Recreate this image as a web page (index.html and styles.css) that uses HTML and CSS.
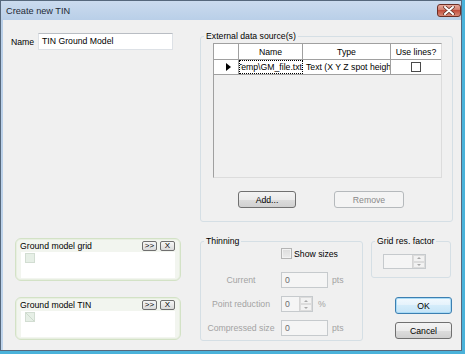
FILE: index.html
```html
<!DOCTYPE html>
<html lang="en">
<head>
  <meta charset="UTF-8">
  <meta name="viewport" content="width=device-width, initial-scale=1.0">
  <title>Create new TIN</title>
  <link rel="stylesheet" href="styles.css">
</head>
<body>
  <div class="window">
    <div class="titlebar">
      <span class="title">Create new TIN</span>
      <span class="close">
        <svg width="12" height="9" viewBox="0 0 12 9">
          <path d="M2 1 L10 8 M10 1 L2 8" stroke="#5a2a22" stroke-width="3.4" stroke-linecap="round"/>
          <path d="M2 1 L10 8 M10 1 L2 8" stroke="#fff" stroke-width="2" stroke-linecap="round"/>
        </svg>
      </span>
    </div>

    <div class="client">
      <div class="name-row">
        <label for="tinName">Name</label>
        <div class="textbox" id="tinName">TIN Ground Model</div>
      </div>

      <fieldset class="group external">
        <legend>External data source(s)</legend>
        <div class="data-grid">
          <div class="grid-row head">
            <div class="cell c-row"></div>
            <div class="cell c-name">Name</div>
            <div class="cell c-type">Type</div>
            <div class="cell c-lines">Use lines?</div>
          </div>
          <div class="grid-row">
            <div class="cell c-row"><span class="arrow"></span></div>
            <div class="cell c-name focus"><span>C:\Temp\GM_file.txt</span></div>
            <div class="cell c-type left">Text (X Y Z spot heights)</div>
            <div class="cell c-lines"><span class="check"></span></div>
          </div>
        </div>
        <div class="group-buttons">
          <button class="btn add">Add...</button>
          <button class="btn remove" disabled>Remove</button>
        </div>
      </fieldset>

      <div class="models">
        <div class="model-panel">
          <div class="panel-head">
            <span>Ground model grid</span>
            <span class="mini-btns"><span class="mini">&gt;&gt;</span><span class="mini">X</span></span>
          </div>
          <div class="panel-body">
            <svg class="slot" width="10" height="10" viewBox="0 0 10 10">
              <rect x="0.5" y="0.5" width="9" height="9" fill="#e6efe6" stroke="#d2ddd2"/>
            </svg>
          </div>
        </div>
        <div class="model-panel">
          <div class="panel-head">
            <span>Ground model TIN</span>
            <span class="mini-btns"><span class="mini">&gt;&gt;</span><span class="mini">X</span></span>
          </div>
          <div class="panel-body">
            <svg class="slot" width="10" height="10" viewBox="0 0 10 10">
              <rect x="0.5" y="0.5" width="9" height="9" fill="#e6efe6" stroke="#d2ddd2"/>
              <path d="M1 1 L9 9" stroke="#cddacd"/>
            </svg>
          </div>
        </div>
      </div>

      <fieldset class="group thinning">
        <legend>Thinning</legend>
        <div class="show-row"><span class="check off"></span><span>Show sizes</span></div>
        <div class="field-row">
          <span class="field-label">Current</span>
          <span class="field wide">0</span>
          <span class="unit">pts</span>
        </div>
        <div class="field-row">
          <span class="field-label">Point reduction</span>
          <span class="spin small"><span class="spin-text">0</span><span class="spin-btns"><i class="up"></i><i class="down"></i></span></span>
          <span class="unit pct">%</span>
        </div>
        <div class="field-row">
          <span class="field-label">Compressed size</span>
          <span class="field wide">0</span>
          <span class="unit">pts</span>
        </div>
      </fieldset>

      <div class="side">
        <fieldset class="group grid-res">
          <legend>Grid res. factor</legend>
          <span class="spin res"><span class="spin-text"></span><span class="spin-btns"><i class="up"></i><i class="down"></i></span></span>
        </fieldset>
        <button class="btn ok">OK</button>
        <button class="btn cancel">Cancel</button>
      </div>
    </div>
  </div>
</body>
</html>
```

FILE: styles.css
```css
* {
  box-sizing: border-box;
}

body {
  margin: 0;
  background-color: #4ab2da;
  font-family: "Liberation Sans", Arial, sans-serif;
  font-size: 8.7px;
  color: #000;
}

.window {
  width: 462px;
  height: 351px;
  border: 1px solid #56687c;
  background: linear-gradient(#cbdbee, #b9cfe8 19px, #bfd4eb);
  display: flex;
  flex-direction: column;
}

.titlebar {
  height: 19px;
  display: flex;
  align-items: center;
  justify-content: space-between;
  padding: 0 0 0 5px;
}

.title {
  font-size: 9.2px;
  color: #1e2a36;
}

.close {
  width: 24px;
  height: 13px;
  border: 1px solid #6b2f26;
  border-radius: 3px;
  background: linear-gradient(#e9a99b, #d07d6d 45%, #c24e3d 50%, #d88a78);
  display: flex;
  align-items: center;
  justify-content: center;
}

.client {
  flex: 1;
  margin-left: 2px;
  background-color: #f0f0f0;
  padding-top: 10px;
  display: grid;
  grid-template-columns: 189px 163px 82px;
  grid-template-rows: 192px 106px;
  column-gap: 8px;
  row-gap: 13px;
}

/* name */

.name-row {
  align-self: start;
  margin-top: 3px;
  padding-left: 8px;
  display: flex;
  align-items: center;
}

.name-row label {
  width: 27px;
}

.textbox {
  width: 135px;
  height: 17px;
  border: 1px solid #dde1e6;
  border-top-color: #b9bdc3;
  background-color: #fff;
  padding-left: 3px;
  line-height: 15px;
}

/* group boxes */

.group {
  margin: 0;
  padding: 0;
  min-width: 0;
  border: 1px solid #d5dfe5;
  border-radius: 3px;
}

.group legend {
  margin-left: 3px;
  padding: 0 2px;
  line-height: 13px;
}

.external {
  grid-column: 2 / 4;
}

.data-grid {
  margin-left: 12px;
  width: 229px;
  height: 135px;
  border: 1px solid #a0a0a0;
  border-right-color: #dcdcdc;
  border-bottom-color: #dcdcdc;
  background-color: #f0f0f0;
}

.grid-row {
  display: flex;
  height: 15px;
  background-color: #fff;
  border-bottom: 1px solid #a0a0a0;
}

.grid-row.head {
  height: 16px;
}

.cell {
  border-right: 1px solid #a0a0a0;
  display: flex;
  align-items: center;
  justify-content: center;
  overflow: hidden;
  white-space: nowrap;
}

.c-row {
  width: 25px;
  justify-content: flex-start;
  padding-left: 12px;
}

.c-name {
  width: 64px;
}

.c-type {
  width: 88px;
}

.c-lines {
  width: 50px;
  border-right: none;
}

.cell.focus {
  border: 1px dotted #000;
  justify-content: flex-end;
}

.cell.left {
  justify-content: flex-start;
  padding-left: 3px;
}

.arrow {
  width: 0;
  height: 0;
  border-left: 5px solid #000;
  border-top: 4px solid transparent;
  border-bottom: 4px solid transparent;
}

.check {
  width: 10px;
  height: 10px;
  border: 1px solid #4a4a4a;
  background-color: #fff;
}

.group-buttons {
  margin-top: 13px;
  padding-left: 37px;
  display: flex;
  gap: 38px;
}

.btn {
  height: 17px;
  padding: 0;
  border: 1px solid #707070;
  border-radius: 3px;
  background: linear-gradient(#f3f3f3, #ebebeb 50%, #dddddd 50%, #d0d0d0);
  font-family: inherit;
  font-size: inherit;
  color: #000;
}

.add {
  width: 58px;
}

.remove {
  width: 70px;
  border-color: #b5b9bc;
  background: #f4f4f4;
  color: #8a8a8a;
}

/* ground model panels */

.models {
  padding-left: 12px;
  display: flex;
  flex-direction: column;
  gap: 16px;
}

.model-panel {
  margin-top: 3px;
  width: 166px;
  height: 43px;
  border: 1px solid #d3e2c6;
  border-radius: 6px;
  background-color: #f2f5ef;
  box-shadow: inset 0 0 0 1px #e8efe1;
  padding: 0 0 2px 0;
}

.model-panel + .model-panel {
  margin-top: 0;
}

.panel-head {
  height: 13px;
  padding: 0 5px 0 4px;
  display: flex;
  align-items: center;
  justify-content: space-between;
}

.mini-btns {
  display: flex;
  gap: 3px;
}

.mini {
  width: 15px;
  height: 10px;
  border: 1px solid #6f6f6f;
  border-radius: 2px;
  background: linear-gradient(#f6f6f6, #dadada);
  font-size: 8px;
  line-height: 8px;
  text-align: center;
}

.panel-body {
  margin: 0 5px;
  height: 26px;
  background-color: #fff;
  padding: 1px 4px;
}

.slot {
  display: block;
}

/* thinning */

.show-row {
  margin-top: -1px;
  height: 13px;
  padding-left: 80px;
  display: flex;
  align-items: center;
  gap: 2px;
}

.check.off {
  width: 11px;
  height: 11px;
  border-color: #b4b4b4;
  background: linear-gradient(#dcdcdc, #ececec);
  box-shadow: inset 0 0 0 1px #f2f2f2;
}

.field-row {
  margin-top: 8px;
  height: 16px;
  display: flex;
  align-items: center;
}

.show-row + .field-row {
  margin-top: 12px;
}

.field-label {
  width: 70px;
  margin: 0 5px;
  text-align: center;
  color: #a3a3a3;
  white-space: nowrap;
}

.field {
  height: 16px;
  border: 1px solid #c6cacd;
  background-color: #f5f5f5;
  padding-left: 3px;
  line-height: 14px;
  color: #6d6d6d;
}

.field.wide {
  width: 47px;
}

.unit {
  margin-left: 4px;
  color: #a3a3a3;
}

.unit.pct {
  margin-left: 5px;
}

.spin {
  display: flex;
  border: 1px solid #c6cacd;
  background-color: #f5f5f5;
  color: #6d6d6d;
}

.spin.small {
  width: 32px;
  height: 16px;
}

.spin-text {
  flex: 1;
  padding-left: 3px;
  line-height: 14px;
}

.spin-btns {
  width: 13px;
  display: flex;
  flex-direction: column;
  border-left: 1px solid #d4d4d4;
}

.spin-btns i {
  flex: 1;
  display: flex;
  align-items: center;
  justify-content: center;
  border: 1px solid #dcdcdc;
  background-color: #f2f2f2;
}

.spin-btns i::after {
  content: "";
  border-left: 2px solid transparent;
  border-right: 2px solid transparent;
}

.spin-btns .up::after {
  border-bottom: 2px solid #a8a8a8;
}

.spin-btns .down::after {
  border-top: 2px solid #a8a8a8;
}

/* right column */

.side {
  display: flex;
  flex-direction: column;
}

.grid-res {
  width: 80px;
  height: 43px;
}

.spin.res {
  margin: 6px 0 0 11px;
  width: 43px;
  height: 15px;
}

.ok,
.cancel {
  margin-left: 24px;
  width: 57px;
}

.ok {
  margin-top: 19px;
  border-color: #3c7fb1;
  background: linear-gradient(#f2f9fe, #e4f2fb 50%, #d4ecfa 50%, #c6e4f7);
  box-shadow: inset 0 0 0 1px #a9dbf6;
}

.cancel {
  margin-top: 8px;
}
```
